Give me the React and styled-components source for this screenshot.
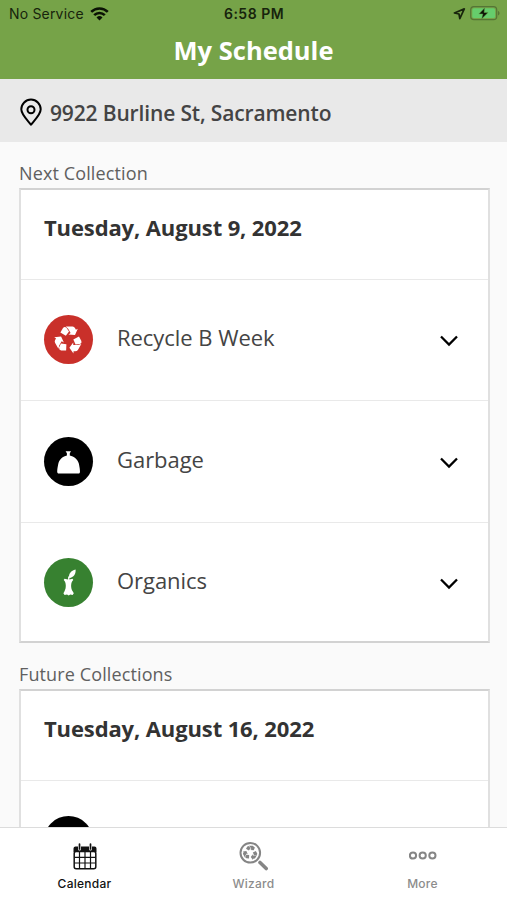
import React from "react";
import styled, { createGlobalStyle } from "styled-components";

const GlobalStyle = createGlobalStyle`
  * {
    box-sizing: border-box;
  }
  body {
    margin: 0;
    background: #fafafa;
    font-family: "Open Sans", "Noto Sans", sans-serif;
    color: #333;
  }
`;
const Screen = styled.div`
  display: flex;
  flex-direction: column;
  width: 507px;
  height: 900px;
  overflow: hidden;
`;
const Header = styled.header`
  flex: none;
  height: 79px;
  background: #76a348;
`;
const StatusBar = styled.div`
  display: grid;
  grid-template-columns: 1fr auto 1fr;
  align-items: center;
  height: 28px;
  padding: 0 7px 0 9px;
  font-family: Inter, sans-serif;
  font-size: 14px;
  line-height: 28px;
  color: #17240c;
`;
const StatusGroup = styled.div`
  display: flex;
  align-items: center;
  justify-content: ${(props) => (props.$end ? "flex-end" : "flex-start")};
  gap: ${(props) => (props.$end ? "4px" : "6px")};
  letter-spacing: 0.18px;
`;
const Clock = styled.div`
  padding-right: 1px;
  font-weight: 600;
  font-size: 14px;
  letter-spacing: 0.5px;
`;
const Title = styled.h1`
  margin: 0;
  padding-top: 4px;
  font-size: 25.5px;
  font-weight: 700;
  line-height: 36px;
  text-align: center;
  color: #fff;
`;
const Address = styled.div`
  flex: none;
  display: flex;
  align-items: center;
  gap: 8px;
  height: 63px;
  padding: 3px 20px 0;
  background: #e9e9e9;
  font-size: 21px;
  font-weight: 600;
  letter-spacing: -0.15px;
  color: #444;
  span {
    padding-top: 2px;
  }
`;
const Content = styled.main`
  flex: 1;
  min-height: 0;
  overflow: hidden;
  padding: 18px 17px 0 19px;
`;
const Section = styled.section`
  margin-bottom: 18px;
`;
const Label = styled.h2`
  margin: 0;
  height: 28px;
  font-size: 18px;
  font-weight: 400;
  line-height: 26px;
  letter-spacing: 0.12px;
  color: #606060;
`;
const Card = styled.div`
  border: 2px solid #d2d2d2;
  border-right-color: #e0e0e0;
  border-left-color: #e0e0e0;
  background: #fff;
`;
const CardDate = styled.h3`
  margin: 0;
  height: 88.5px;
  padding: 22px 23px 0;
  font-size: 22px;
  font-weight: 700;
  line-height: 30px;
  letter-spacing: -0.12px;
`;
const Row = styled.div`
  display: flex;
  align-items: flex-start;
  height: 121.5px;
  padding: 35.5px 29px 0 22.5px;
  border-top: 1px solid #e9e9e9;
  &:last-child {
    height: 119.5px;
  }
`;
const Badge = styled.div`
  flex: none;
  width: 49px;
  height: 49px;
  border-radius: 50%;
  background: ${(props) => props.$color};
  color: #fff;
  svg {
    display: block;
  }
`;
const RowName = styled.div`
  flex: 1;
  padding: 7px 0 0 24.5px;
  font-size: 22px;
  line-height: 30px;
  letter-spacing: -0.04px;
  color: #444;
`;
const Chevron = styled.svg`
  width: 20px;
  height: 12px;
  margin-top: 20px;
`;
const TabBar = styled.nav`
  flex: none;
  display: grid;
  grid-template-columns: repeat(3, 1fr);
  height: 73px;
  border-top: 1px solid #dcdcdc;
  background: #fff;
`;
const Tab = styled.div`
  display: flex;
  flex-direction: column;
  align-items: center;
  font-family: Inter, sans-serif;
  font-size: 12px;
  font-weight: 500;
  line-height: 18px;
  letter-spacing: 0.25px;
  color: ${(props) => (props.$active ? "#111" : "#8c8c8c")};
`;
const TabIcon = styled.div`
  display: flex;
  align-items: center;
  justify-content: center;
  height: 47px;
  padding-top: 9px;
`;

const WifiIcon = () => (
  <svg width="19" height="15" viewBox="0 0 19 15" fill="none" stroke="#0b1205" strokeWidth="2.6">
    <path d="M1.2 4.9a11.8 11.8 0 0 1 16.6 0" />
    <path d="M4.2 8.2a7.5 7.5 0 0 1 10.6 0" />
    <path d="M9.5 13.5 6.5 10.5a4.3 4.3 0 0 1 6 0Z" fill="#0b1205" stroke="none" />
  </svg>
);

const LocationIcon = () => (
  <svg width="13" height="12" viewBox="0 0 13 12" fill="none" stroke="#17240c" strokeWidth="1.7" strokeLinejoin="round">
    <path d="M11.3.9 1.4 5l4.6 1 .8 4.7Z" />
  </svg>
);

const BatteryIcon = () => (
  <svg width="30" height="16" viewBox="0 0 30 16">
    <rect x="0.7" y="0.7" width="26" height="13" rx="3.2" fill="none" stroke="#557536" strokeWidth="1.2" />
    <rect x="2.3" y="2.3" width="22.8" height="9.8" rx="1.7" fill="#66cd6c" />
    <path d="M28 5c2 .7 2 3.7 0 4.4Z" fill="#557536" />
    <path d="M14.8 1.7 8.8 8h4l-1.2 5 6.5-6.6h-4Z" fill="#0b1205" stroke="#66a94c" strokeWidth="0.5" />
  </svg>
);

const PinIcon = () => (
  <svg width="22" height="28" viewBox="0 0 22 28" fill="none" stroke="#000" strokeWidth="2">
    <path d="M11 26.7C8.5 23.2 1.3 16.9 1.3 11.3a9.7 9.7 0 0 1 19.4 0C20.7 16.9 13.5 23.2 11 26.7Z" strokeLinejoin="round" />
    <circle cx="11" cy="11.7" r="3.5" />
  </svg>
);

// three folded arrows around the centre of a 49px badge
const RecycleArrows = () => (
  <g fill="currentColor" stroke="none">
    {[0, 120, 240].map((angle) => (
      <g key={angle} transform={`rotate(${angle} 24.5 24.8)`}>
        <path d="M16.4 17.4 19 13.1Q20.6 11.3 22.5 12.8L25 16.4 21.8 20.8Z" />
        <path d="M21.8 11.6H28.6Q30.2 11.7 31.1 13.3L31.9 14.7 33.8 13.7 31 20 24.4 19.4 26.6 18.1 24.3 13.9Z" />
      </g>
    ))}
  </g>
);

const RecycleIcon = () => (
  <svg width="49" height="49" viewBox="0 0 49 49">
    <RecycleArrows />
  </svg>
);

const GarbageIcon = () => (
  <svg width="49" height="49" viewBox="0 0 49 49" fill="#fff">
    <path d="M21.6 14.2h5.4l-1.2 2.1v2.2c3.9.7 8.2 3.9 9.1 8.3.7 3.5 1.1 5.8 1.1 8.4l-.8 1.2H14l-.8-1.2c0-2.8.5-5.3 1.1-8.4.9-4.4 4.7-7.6 8.6-8.3v-2.2Z" />
  </svg>
);

const OrganicsIcon = () => (
  <svg width="49" height="49" viewBox="0 0 49 49" fill="#fff">
    <path d="M25.2 20.2c-1-4.3 1.8-7.6 6.4-8.7.4 4.5-1.8 7.7-6.4 8.7Z" />
    <path d="M24.1 18.5h1.3v3.1l3.1-.9.8 1.4c-2.8 2.3-2.8 8.4-.5 11.5l1 1.7-1.2 1.7-2.3-.4-1.6 1-1.7-1-2.4.5-1.2-1.8 1-1.8c2-3.1 2-9-.7-11.4l.8-1.4 3.6.9Z" />
  </svg>
);

const CalendarIcon = () => (
  <svg width="24" height="27" viewBox="0 0 24 27">
    <path d="M2.5 3.5h19a2 2 0 0 1 2 2V9H.5V5.5a2 2 0 0 1 2-2Z" fill="#111" />
    <rect x="1.2" y="8.5" width="21.6" height="17.2" rx="2" fill="#fff" stroke="#111" strokeWidth="1.5" />
    <path d="M6.5 9v16.5M12 9v16.5M17.5 9v16.5M1.5 14.4h21M1.5 20h21" stroke="#111" strokeWidth="1.2" />
    <path d="M6.5 2v4M17.5 2v4" stroke="#fff" strokeWidth="3" strokeLinecap="round" />
    <path d="M6.5 1v5M17.5 1v5" stroke="#111" strokeWidth="1.7" strokeLinecap="round" />
  </svg>
);

const WizardIcon = () => (
  <svg width="29" height="29" viewBox="0 0 29 29" fill="none" stroke="#858585" color="#858585">
    <circle cx="11.3" cy="10.8" r="9.8" strokeWidth="2" />
    <path d="m21 20.5 6.2 6" strokeWidth="3.6" strokeLinecap="round" />
    <g transform="translate(-1.7 -2.4) scale(0.53)">
      <RecycleArrows />
    </g>
  </svg>
);

const MoreIcon = () => (
  <svg width="28" height="10" viewBox="0 0 28 10" fill="none" stroke="#858585" strokeWidth="2">
    <circle cx="4" cy="4.5" r="3.1" />
    <circle cx="13.7" cy="4.5" r="3.1" />
    <circle cx="23.4" cy="4.5" r="3.1" />
  </svg>
);

const kinds = {
  recycle: { color: "#c9302a", icon: <RecycleIcon /> },
  garbage: { color: "#000", icon: <GarbageIcon /> },
  organics: { color: "#378130", icon: <OrganicsIcon /> },
};

const CollectionRow = ({ kind, name }) => (
  <Row>
    <Badge $color={kinds[kind].color}>{kinds[kind].icon}</Badge>
    <RowName>{name}</RowName>
    <Chevron viewBox="0 0 20 12" fill="none" stroke="#000" strokeWidth="2.3">
      <path d="m2 1.5 8 8 8-8" />
    </Chevron>
  </Row>
);

const App = () => {
  return (
    <Screen>
      <GlobalStyle />
      <Header>
        <StatusBar>
          <StatusGroup>
            No Service
            <WifiIcon />
          </StatusGroup>
          <Clock>6:58 PM</Clock>
          <StatusGroup $end>
            <LocationIcon />
            <BatteryIcon />
          </StatusGroup>
        </StatusBar>
        <Title>My Schedule</Title>
      </Header>
      <Address>
        <PinIcon />
        <span>9922 Burline St, Sacramento</span>
      </Address>
      <Content>
        <Section>
          <Label>Next Collection</Label>
          <Card>
            <CardDate>Tuesday, August 9, 2022</CardDate>
            <CollectionRow kind="recycle" name="Recycle B Week" />
            <CollectionRow kind="garbage" name="Garbage" />
            <CollectionRow kind="organics" name="Organics" />
          </Card>
        </Section>
        <Section>
          <Label>Future Collections</Label>
          <Card>
            <CardDate>Tuesday, August 16, 2022</CardDate>
            <CollectionRow kind="garbage" />
          </Card>
        </Section>
      </Content>
      <TabBar>
        <Tab $active>
          <TabIcon>
            <CalendarIcon />
          </TabIcon>
          Calendar
        </Tab>
        <Tab>
          <TabIcon>
            <WizardIcon />
          </TabIcon>
          Wizard
        </Tab>
        <Tab>
          <TabIcon>
            <MoreIcon />
          </TabIcon>
          More
        </Tab>
      </TabBar>
    </Screen>
  );
};

export default App;
